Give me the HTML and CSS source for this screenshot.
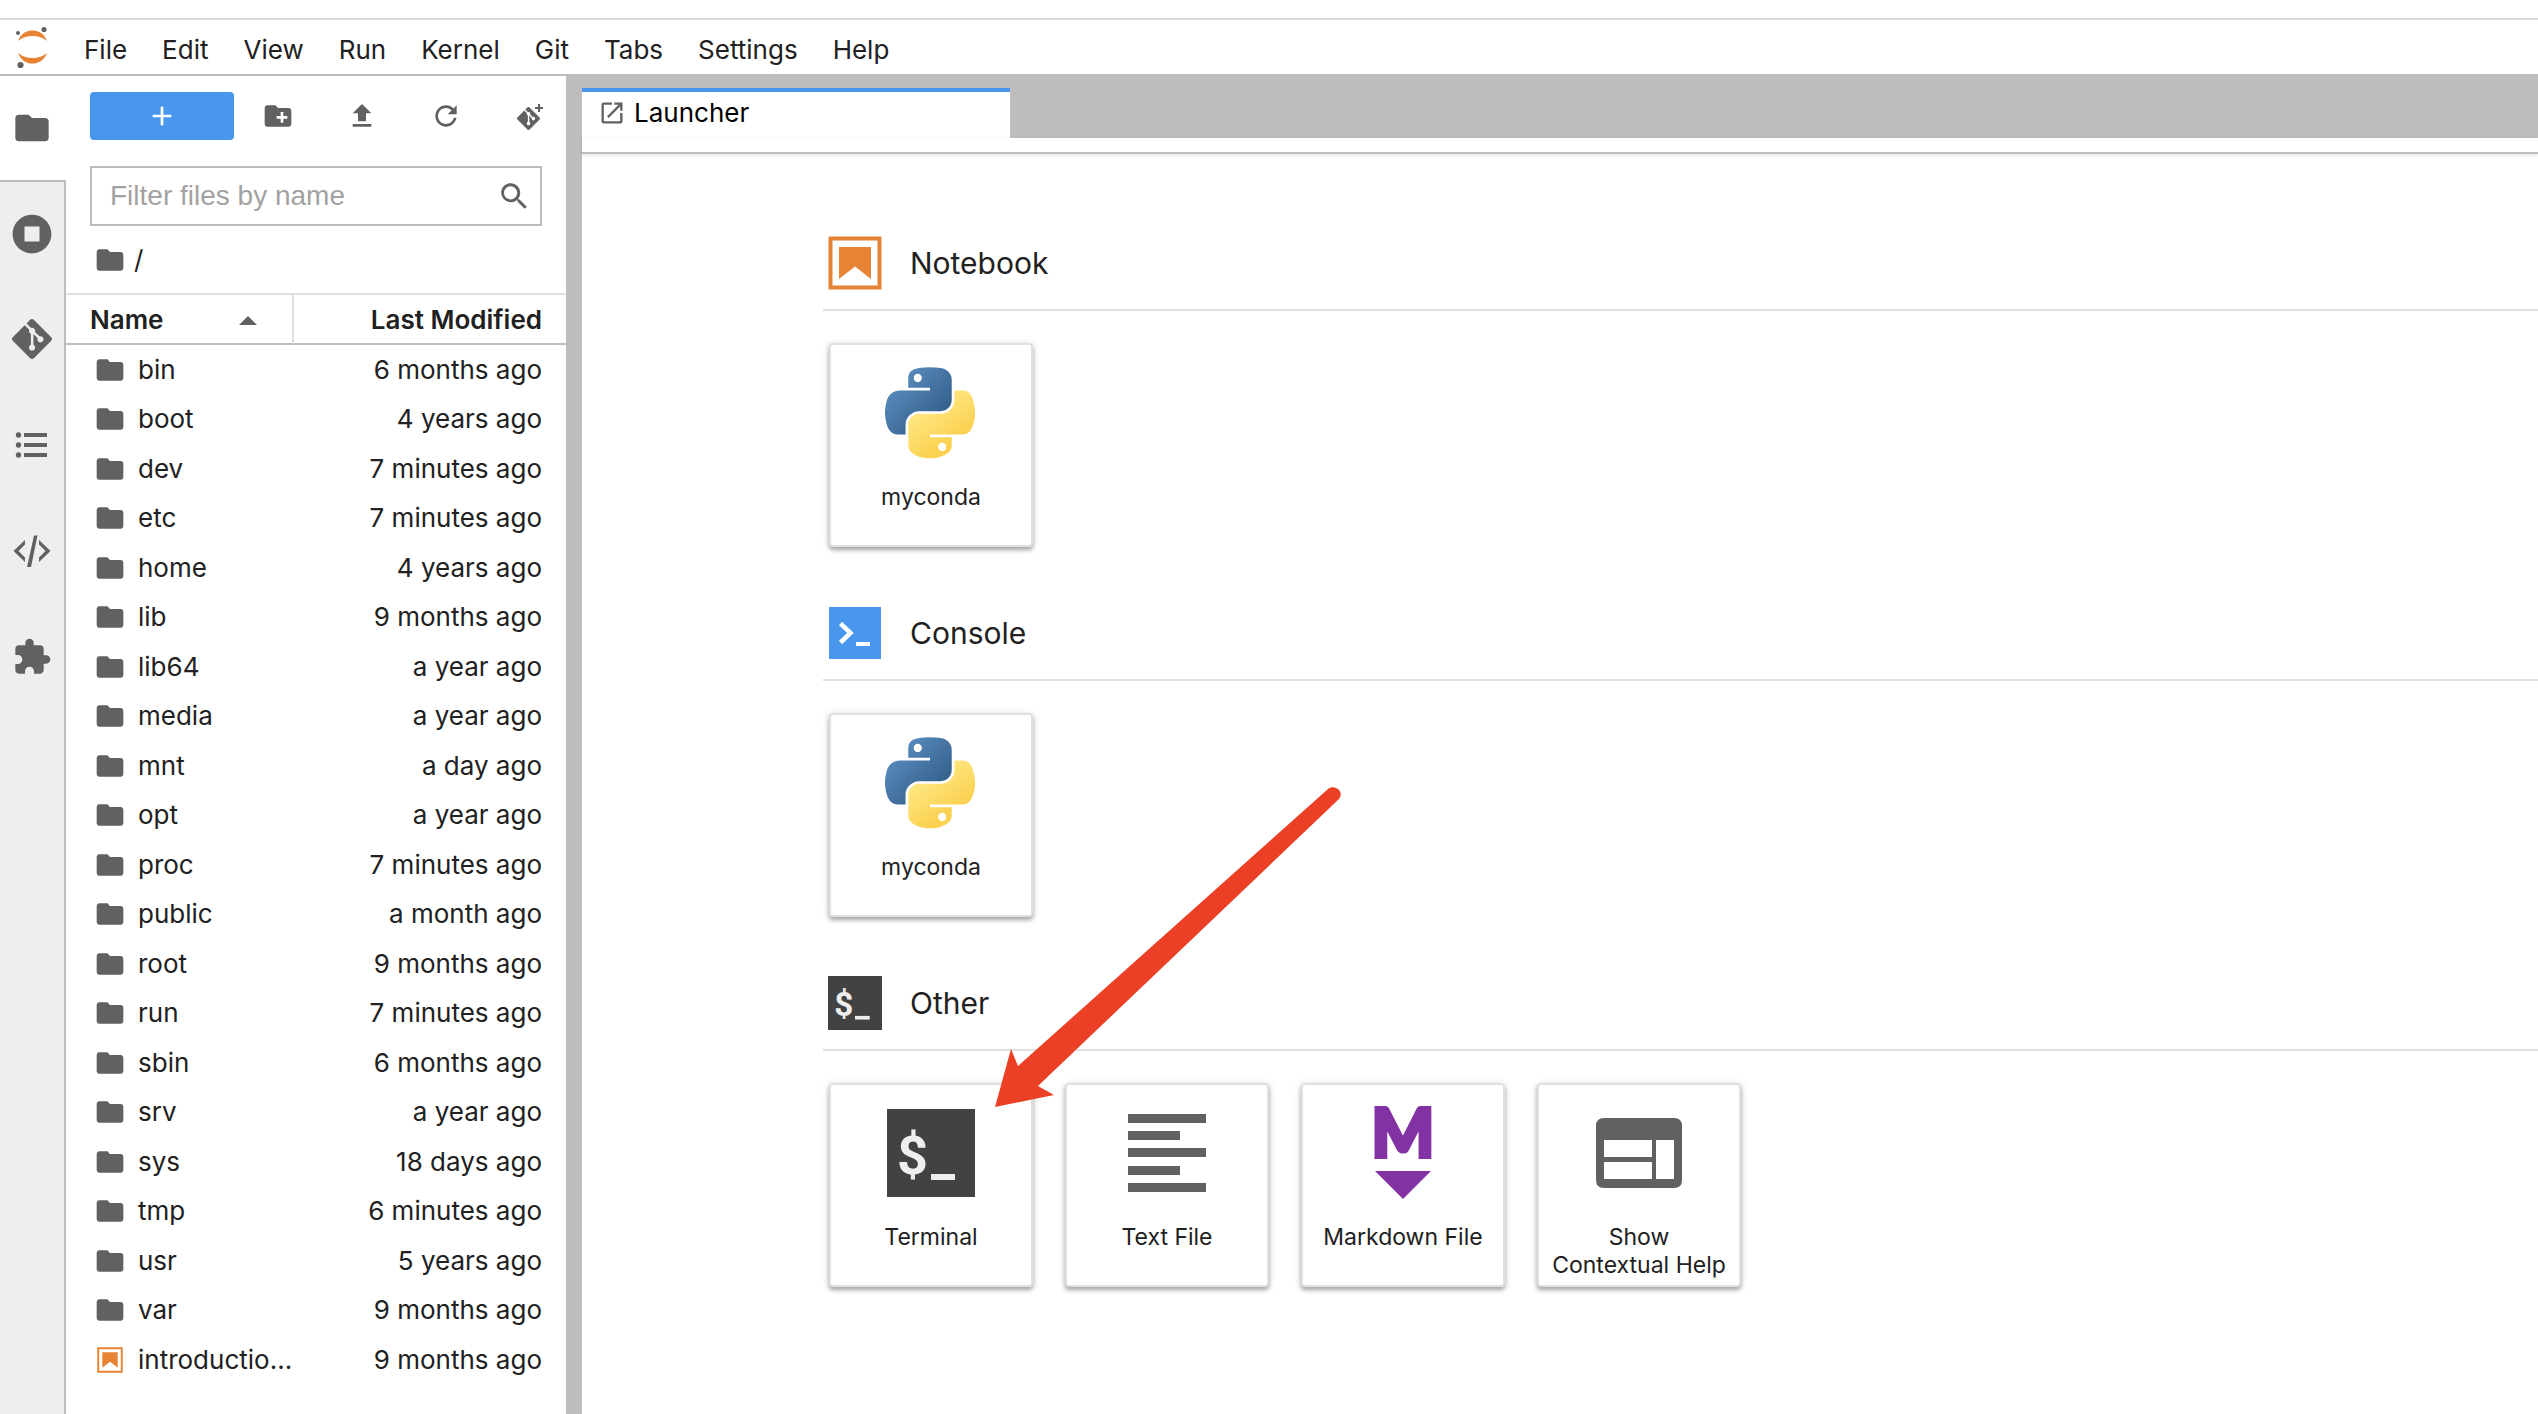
FILE: index.html
```html
<!DOCTYPE html>
<html lang="en">
<head>
<meta charset="utf-8">
<title>JupyterLab</title>
<link rel="stylesheet" href="styles.css">
</head>
<body>
<svg class="defs" aria-hidden="true">
  <defs>
    <linearGradient id="py-blue" x1="0" y1="0" x2="0.8" y2="0.8"><stop offset="0" stop-color="#6298cb"/><stop offset="1" stop-color="#345f8c"/></linearGradient>
    <linearGradient id="py-yellow" x1="0.3" y1="0.25" x2="0.65" y2="0.75"><stop offset="0" stop-color="#ffe680"/><stop offset="1" stop-color="#fad150"/></linearGradient>
    <symbol id="folder" viewBox="0 0 24 24"><path d="M10 4H4c-1.100 0-1.990.9-1.990 2L2 18c0 1.100.9 2 2 2h16c1.100 0 2-.9 2-2V8c0-1.100-.9-2-2-2h-8l-2-2z"/></symbol>
    <symbol id="git" viewBox="0 0 24 24"><path d="M23.546 10.930L13.067.452c-.604-.603-1.582-.603-2.188 0L8.708 2.627l2.760 2.760c.645-.215 1.379-.070 1.889.441.516.515.658 1.258.438 1.900l2.658 2.660c.645-.223 1.387-.078 1.900.435.721.720.721 1.884 0 2.604-.719.719-1.881.719-2.600 0-.539-.541-.674-1.337-.404-1.996L12.860 8.955v6.525c.176.086.342.203.488.348.713.721.713 1.883 0 2.600-.719.721-1.889.721-2.609 0-.719-.719-.719-1.879 0-2.598.182-.180.387-.316.605-.406V8.835c-.217-.091-.424-.222-.600-.401-.545-.545-.676-1.342-.396-2.009L7.636 3.700.450 10.881c-.600.605-.600 1.584 0 2.189l10.480 10.477c.604.604 1.582.604 2.186 0l10.430-10.430c.605-.603.605-1.582 0-2.187"/></symbol>
    <symbol id="notebook" viewBox="0 0 54 54"><path fill="none" stroke="#e78334" stroke-width="4" d="M2.500 2.500h49v49h-49z"/><path fill="#e78334" d="M11 11h32v32L27 30.500 11 43z"/></symbol>
    <symbol id="python" viewBox="0 0 111 113">
      <path fill="url(#py-blue)" d="M54.919 0C50.335.022 45.958.413 42.106 1.095 30.760 3.099 28.700 7.295 28.700 15.032v10.219h26.813v3.406H18.638C10.845 28.657 4.022 33.341 1.888 42.251c-2.462 10.213-2.571 16.586 0 27.250 1.906 7.938 6.457 13.594 14.250 13.594h9.218v-12.250c0-8.850 7.657-16.657 16.750-16.657h26.782c7.455 0 13.406-6.138 13.406-13.625V15.032c0-7.266-6.130-12.725-13.406-13.937C64.282.328 59.502-.020 54.919 0zM40.419 8.220c2.769 0 5.031 2.298 5.031 5.125 0 2.816-2.262 5.093-5.031 5.093-2.780 0-5.031-2.277-5.031-5.093 0-2.827 2.251-5.125 5.031-5.125z"/>
      <path fill="url(#py-yellow)" d="M85.638 28.657v11.906c0 9.231-7.826 17-16.750 17H42.106c-7.336 0-13.406 6.279-13.406 13.625V96.720c0 7.266 6.319 11.540 13.406 13.625 8.488 2.495 16.627 2.946 26.782 0 6.750-1.955 13.406-5.888 13.406-13.625V86.501H55.513v-3.406H95.700c7.792 0 10.696-5.436 13.406-13.594 2.799-8.399 2.680-16.476 0-27.250-1.926-7.758-5.604-13.594-13.406-13.594H85.638zM70.575 93.313c2.779 0 5.031 2.278 5.031 5.094 0 2.827-2.252 5.125-5.031 5.125-2.769 0-5.031-2.298-5.031-5.125 0-2.816 2.262-5.094 5.031-5.094z"/>
    </symbol>
    <symbol id="terminal" viewBox="0 0 88 88"><path fill="#424242" d="M0 0h88v88H0z"/><text class="dollar" x="10" y="65">$</text><path fill="#eee" d="M44 65h24v6H44z"/></symbol>
  </defs>
</svg>

<header class="menubar">
  <svg class="logo" viewBox="0 0 40 44" aria-hidden="true">
    <g fill="#e78334"><path d="M6 16C9 8 15 5.500 20.500 5.500S32 8 35 16C31 12.500 26 11 20.500 11S10 12.500 6 16z"/><path d="M6 28c3 8 9 10.500 14.500 10.500S32 36 35 28c-4 3.500-9 5-14.500 5S10 31.500 6 28z"/></g>
    <g fill="#616161"><circle cx="6" cy="8" r="2"/><circle cx="32" cy="4.500" r="2.600"/><circle cx="8.500" cy="40" r="3.100"/></g>
  </svg>
  <nav class="menus" aria-label="Main menu">
    <button>File</button><button>Edit</button><button>View</button><button>Run</button><button>Kernel</button><button>Git</button><button>Tabs</button><button>Settings</button><button>Help</button>
  </nav>
</header>

<div class="workspace">
  <nav class="rail" aria-label="Side panels">
    <button class="active" aria-label="File Browser"><svg><use href="#folder"/></svg></button>
    <button aria-label="Running Terminals and Kernels"><svg viewBox="0 0 512 512"><path d="M256 8C119 8 8 119 8 256s111 248 248 248 248-111 248-248S393 8 256 8zm96 344H160V160h192z"/></svg></button>
    <button aria-label="Git"><svg><use href="#git"/></svg></button>
    <button aria-label="Table of Contents"><svg viewBox="0 0 40 40"><circle cx="6.500" cy="10" r="2.700"/><circle cx="6.500" cy="20" r="2.700"/><circle cx="6.500" cy="30" r="2.700"/><path d="M12 8h23v4H12zM12 18h23v4H12zM12 28h23v4H12z"/></svg></button>
    <button aria-label="Property Inspector"><svg viewBox="0 0 40 40"><path d="M13 9v4.500L6.500 20l6.500 6.500V31L1.500 20zM27 9v4.500l6.500 6.500-6.500 6.500V31l11.500-11zM22 4.500h3.500L19 36h-4z"/></svg></button>
    <button aria-label="Extension Manager"><svg viewBox="0 0 24 24"><path d="M20.500 11H19V7c0-1.100-.9-2-2-2h-4V3.500C13 2.120 11.880 1 10.500 1S8 2.120 8 3.500V5H4c-1.100 0-1.990.9-1.990 2v3.800H3.500c1.490 0 2.700 1.210 2.700 2.700s-1.210 2.700-2.700 2.700H2V20c0 1.100.9 2 2 2h3.800v-1.500c0-1.490 1.210-2.700 2.700-2.700s2.700 1.210 2.700 2.700V22H17c1.100 0 2-.9 2-2v-4h1.500c1.380 0 2.500-1.120 2.500-2.500S21.880 11 20.500 11z"/></svg></button>
    <div class="rail-rest"></div>
  </nav>

  <aside class="files">
    <div class="tools">
      <button class="new" aria-label="New Launcher"><svg viewBox="0 0 24 24"><path d="M19 13h-6v6h-2v-6H5v-2h6V5h2v6h6v2z"/></svg></button>
      <button aria-label="New Folder"><svg viewBox="0 0 24 24"><path d="M20 6h-8l-2-2H4c-1.110 0-1.990.890-1.990 2L2 18c0 1.110.890 2 2 2h16c1.110 0 2-.890 2-2V8c0-1.110-.890-2-2-2zm-1 8h-3v3h-2v-3h-3v-2h3V9h2v3h3v2z"/></svg></button>
      <button aria-label="Upload Files"><svg viewBox="0 0 24 24"><path d="M5 20h14v-2H5zM5 10h4v6h6v-6h4l-7-7z"/></svg></button>
      <button aria-label="Refresh File List"><svg viewBox="0 0 18 18"><path d="M9 13.500c-2.490 0-4.500-2.010-4.500-4.500S6.510 4.500 9 4.500c1.240 0 2.360.520 3.170 1.330L10 8h5V3l-1.760 1.760C12.150 3.680 10.660 3 9 3 5.690 3 3.010 5.690 3.010 9S5.690 15 9 15c2.970 0 5.430-2.160 5.900-5h-1.520c-.460 2-2.240 3.500-4.380 3.500z"/></svg></button>
      <button aria-label="Git Clone"><svg viewBox="0 0 32 32"><use href="#git" x="3" y="7" width="23" height="23"/><path d="M24 4h2v3h3v2h-3v3h-2V9h-3V7h3z"/></svg></button>
    </div>
    <div class="filter">
      <input type="text" placeholder="Filter files by name" aria-label="Filter files by name">
      <svg viewBox="0 0 18 18" aria-hidden="true"><path d="M12.100 10.900h-.7l-.2-.2c.8-.9 1.300-2.200 1.300-3.500 0-3-2.400-5.400-5.400-5.400S1.800 4.200 1.800 7.100s2.400 5.400 5.400 5.400c1.300 0 2.500-.5 3.500-1.300l.2.2v.7l4.100 4.100 1.200-1.200-4.100-4.100zm-5 0c-2.100 0-3.700-1.700-3.700-3.700s1.700-3.700 3.700-3.700 3.700 1.700 3.700 3.700-1.600 3.700-3.700 3.700z"/></svg>
    </div>
    <div class="crumbs"><svg><use href="#folder"/></svg><a href="#">/</a></div>
    <table class="listing">
      <thead><tr><th class="name" scope="col"><div class="cell">Name<svg viewBox="0 0 18 9"><path d="M0 9l9-9 9 9z"/></svg></div></th><th scope="col">Last Modified</th></tr></thead>
      <tbody>
        <tr><td><div class="cell"><svg><use href="#folder"/></svg>bin</div></td><td>6 months ago</td></tr>
        <tr><td><div class="cell"><svg><use href="#folder"/></svg>boot</div></td><td>4 years ago</td></tr>
        <tr><td><div class="cell"><svg><use href="#folder"/></svg>dev</div></td><td>7 minutes ago</td></tr>
        <tr><td><div class="cell"><svg><use href="#folder"/></svg>etc</div></td><td>7 minutes ago</td></tr>
        <tr><td><div class="cell"><svg><use href="#folder"/></svg>home</div></td><td>4 years ago</td></tr>
        <tr><td><div class="cell"><svg><use href="#folder"/></svg>lib</div></td><td>9 months ago</td></tr>
        <tr><td><div class="cell"><svg><use href="#folder"/></svg>lib64</div></td><td>a year ago</td></tr>
        <tr><td><div class="cell"><svg><use href="#folder"/></svg>media</div></td><td>a year ago</td></tr>
        <tr><td><div class="cell"><svg><use href="#folder"/></svg>mnt</div></td><td>a day ago</td></tr>
        <tr><td><div class="cell"><svg><use href="#folder"/></svg>opt</div></td><td>a year ago</td></tr>
        <tr><td><div class="cell"><svg><use href="#folder"/></svg>proc</div></td><td>7 minutes ago</td></tr>
        <tr><td><div class="cell"><svg><use href="#folder"/></svg>public</div></td><td>a month ago</td></tr>
        <tr><td><div class="cell"><svg><use href="#folder"/></svg>root</div></td><td>9 months ago</td></tr>
        <tr><td><div class="cell"><svg><use href="#folder"/></svg>run</div></td><td>7 minutes ago</td></tr>
        <tr><td><div class="cell"><svg><use href="#folder"/></svg>sbin</div></td><td>6 months ago</td></tr>
        <tr><td><div class="cell"><svg><use href="#folder"/></svg>srv</div></td><td>a year ago</td></tr>
        <tr><td><div class="cell"><svg><use href="#folder"/></svg>sys</div></td><td>18 days ago</td></tr>
        <tr><td><div class="cell"><svg><use href="#folder"/></svg>tmp</div></td><td>6 minutes ago</td></tr>
        <tr><td><div class="cell"><svg><use href="#folder"/></svg>usr</div></td><td>5 years ago</td></tr>
        <tr><td><div class="cell"><svg><use href="#folder"/></svg>var</div></td><td>9 months ago</td></tr>
        <tr><td><div class="cell"><svg viewBox="0 0 32 32"><use href="#notebook" x="3" y="3" width="26" height="26"/></svg>introductio...</div></td><td>9 months ago</td></tr>
      </tbody>
    </table>
  </aside>

  <main class="dock">
    <div class="tabbar">
      <button class="tab"><svg viewBox="0 0 24 24"><path d="M19 19H5V5h7V3H5a2 2 0 0 0-2 2v14a2 2 0 0 0 2 2h14c1.100 0 2-.9 2-2v-7h-2v7zM14 3v2h3.590l-9.830 9.830 1.410 1.410L19 6.410V10h2V3h-7z"/></svg>Launcher</button>
    </div>
    <div class="toolbar"></div>
    <div class="launcher">
      <section>
        <h2><svg><use href="#notebook"/></svg>Notebook</h2>
        <div class="cards">
          <button class="card"><svg viewBox="0 0 104 104"><use href="#python" x="6" y="6" width="90" height="92"/></svg><span>myconda</span></button>
        </div>
      </section>
      <section>
        <h2><svg viewBox="0 0 54 54"><path fill="#4897ec" d="M1 1h52v52H1z"/><path fill="none" stroke="#fff" stroke-width="4.500" d="M12.500 17.500l10 9.500-10 9.500"/><path fill="#fff" d="M28 36h14v4H28z"/></svg>Console</h2>
        <div class="cards">
          <button class="card"><svg viewBox="0 0 104 104"><use href="#python" x="6" y="6" width="90" height="92"/></svg><span>myconda</span></button>
        </div>
      </section>
      <section>
        <h2><svg><use href="#terminal"/></svg>Other</h2>
        <div class="cards">
          <button class="card"><svg viewBox="0 0 104 104"><use href="#terminal" x="8" y="8" width="88" height="88"/></svg><span>Terminal</span></button>
          <button class="card"><svg viewBox="0 0 104 104"><path d="M13 13h78v9H13zM13 30h52v9H13zM13 47h78v9H13zM13 65h52v9H13zM13 82h78v9H13z"/></svg><span>Text File</span></button>
          <button class="card"><svg viewBox="0 0 104 104"><text class="mark" x="52" y="56">M</text><path fill="#8332a4" d="M24 70h56L52 98z"/></svg><span>Markdown File</span></button>
          <button class="card"><svg viewBox="0 0 104 104"><path fill-rule="evenodd" d="M17 17h70q8 0 8 8v54q0 8-8 8H17q-8 0-8-8V25q0-8 8-8zM17 39v17h48V39zM17 61v17h48V61zM69 39v39h18V39z"/></svg><span>Show<br>Contextual Help</span></button>
        </div>
      </section>
      <svg class="arrow" viewBox="0 0 348 324" aria-hidden="true"><path d="M1 321L17 263l7 17L334 3c6-5 17 2 11 10L44 300l16 9z"/></svg>
    </div>
  </main>
</div>
</body>
</html>
```
FILE: styles.css
```css
* { box-sizing: border-box; }
body {
  margin: 0;
  min-height: 100vh;
  display: flex;
  flex-direction: column;
  background: #fff;
  color: #212121;
  font: 26px/32px Inter, "Liberation Sans", sans-serif;
}
button {
  margin: 0;
  padding: 0;
  border: 0;
  background: none;
  color: inherit;
  font: inherit;
}
svg { display: block; flex: none; fill: #616161; }
.defs { position: absolute; width: 0; height: 0; }

.menubar {
  display: flex;
  align-items: center;
  height: 58px;
  margin-top: 18px;
  padding-left: 12px;
  border-top: 2px solid #dadada;
  border-bottom: 2px solid #bdbdbd;
}
.logo { width: 40px; height: 44px; }
.menus { display: flex; gap: 35px; padding-left: 32px; padding-top: 5px; }

.workspace { display: flex; flex: 1; }

.rail { display: flex; flex-direction: column; width: 66px; }
.rail button {
  display: flex;
  align-items: center;
  justify-content: center;
  height: 106px;
  background: #eee;
  border-right: 2px solid #bdbdbd;
}
.rail .active { height: 104px; padding-right: 2px; background: #fff; border: 0; }
.rail .active + button { border-top: 2px solid #bdbdbd; }
.rail svg { width: 40px; height: 40px; }
.rail-rest { flex: 1; background: #eee; border-right: 2px solid #bdbdbd; }

.files { width: 500px; }
.tools {
  display: grid;
  grid-template-columns: 144px repeat(4, 84px);
  height: 64px;
  padding: 16px 24px 0;
}
.tools button { display: flex; align-items: center; justify-content: center; padding-left: 4px; }
.tools svg { width: 32px; height: 32px; }
.tools .new { padding: 0; background: #4897ec; border-radius: 4px; }
.tools .new svg { fill: #fff; }
.filter {
  display: flex;
  align-items: center;
  height: 60px;
  margin: 26px 24px 0;
  padding: 0 10px 0 18px;
  border: 2px solid #bdbdbd;
}
.filter input {
  flex: 1;
  min-width: 0;
  padding: 0;
  border: 0;
  outline: 0;
  background: none;
  font: 28px/32px "Liberation Sans", Arial, sans-serif;
}
.filter input::placeholder { color: #a2a2a2; opacity: 1; }
.filter svg { width: 32px; height: 32px; }
.crumbs { display: flex; align-items: center; gap: 8px; height: 67px; padding-left: 28px; }
.crumbs svg, .listing td svg { width: 32px; height: 32px; }
.crumbs a { color: inherit; text-decoration: none; }

.listing { width: 100%; border-collapse: separate; border-spacing: 0; table-layout: fixed; }
.listing th {
  height: 52px;
  padding: 2px 24px 0;
  border-top: 2px solid #e0e0e0;
  border-bottom: 2px solid #bdbdbd;
  font-weight: 600;
  text-align: right;
}
.listing .name { width: 228px; border-right: 2px solid #e0e0e0; }
.listing .name .cell { justify-content: space-between; padding-right: 11px; }
.listing th svg { width: 18px; height: 9px; }
.cell { display: flex; align-items: center; gap: 12px; white-space: nowrap; }
.listing td { height: 49px; padding: 0 24px 0 28px; text-align: right; }
.listing tr:nth-child(even) td { height: 50px; }

.dock { display: flex; flex: 1; flex-direction: column; min-width: 0; border-left: 16px solid #bdbdbd; }
.tabbar { padding-top: 12px; background: #bdbdbd; }
.tab {
  display: flex;
  align-items: center;
  gap: 8px;
  width: 428px;
  height: 50px;
  padding: 0 16px 4px;
  border-top: 4px solid #4897ec;
  background: #fff;
  color: #000;
}
.tab svg { width: 28px; height: 28px; }
.toolbar { height: 16px; border-bottom: 2px solid #bdbdbd; box-shadow: 0 1px 3px rgba(0, 0, 0, .15); }

.launcher { position: relative; flex: 1; padding: 82px 0 0 241px; }
.launcher section { margin-bottom: 59px; }
.launcher h2 {
  display: flex;
  align-items: center;
  gap: 28px;
  margin: 0;
  padding: 0 0 19px 5px;
  border-bottom: 2px solid #e0e0e0;
  font-size: 30px;
  font-weight: 400;
}
.launcher h2 svg { width: 54px; height: 54px; }
.cards { display: flex; gap: 32px; padding: 32px 0 0 6px; }
.card {
  display: flex;
  flex-direction: column;
  align-items: center;
  width: 204px;
  height: 204px;
  padding: 16px 8px 0;
  border: 2px solid #e0e0e0;
  border-radius: 4px;
  background: #fff;
  box-shadow: 0 3px 4px rgba(0, 0, 0, .3), 0 1px 8px rgba(0, 0, 0, .12);
  font-size: 23px;
  line-height: 28px;
}
.card svg { width: 104px; height: 104px; overflow: visible; }
.card span { padding-top: 18px; }
.dollar { fill: #eee; font: 700 54px Roboto, sans-serif; }
.mark { fill: #8332a4; stroke: #8332a4; stroke-width: 4px; font: 900 66px Lato, sans-serif; text-anchor: middle; }
.arrow { position: absolute; top: 632px; left: 412px; width: 348px; height: 324px; fill: #eb4026; }
```
